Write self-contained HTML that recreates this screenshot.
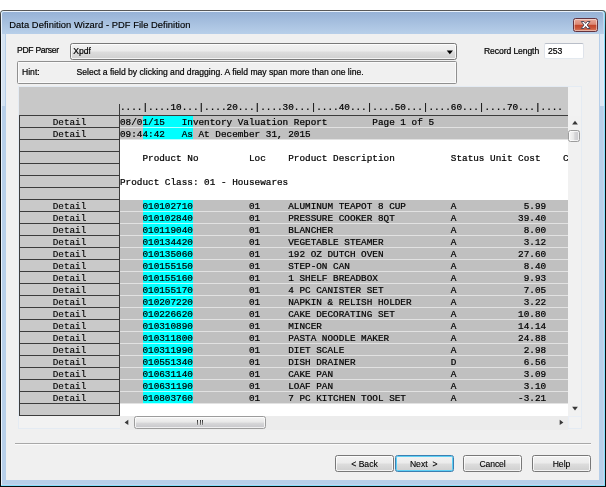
<!DOCTYPE html>
<html><head><meta charset="utf-8"><title>Data Definition Wizard - PDF File Definition</title>
<style>
html,body{margin:0;padding:0;background:#fff;}
body{width:606px;height:487px;position:relative;overflow:hidden;font-family:"Liberation Sans",sans-serif;color:#000;}
.abs,.abs *{position:absolute;box-sizing:border-box;}
#win{left:0;top:10px;width:606px;height:477px;background:linear-gradient(#5a5a5a 0px,#333 12px,#0c0c0c 30px,#0c0c0c 100%);border-radius:4px 4px 0 0;}
#hl{left:1px;top:1px;width:604px;height:475px;background:#84e0fc;border-radius:3px 3px 0 0;}
#hl2{left:0;top:0;width:603px;height:474px;background:#c8d2ea;border-left:1px solid #eaf2fb;border-top:1px solid #eaf2fb;border-radius:3px 3px 0 0;}
#frame{left:0;top:0;width:601px;height:472px;background:#b7cfe9;border-radius:2px 2px 0 0;}
#tbar{left:0;top:0;width:601px;height:22px;background:linear-gradient(#97b2d6,#b8cfe9);border-radius:2px 2px 0 0;}
#title{left:9.3px;top:19px;font-size:9.35px;line-height:12px;white-space:pre;color:#000;letter-spacing:0.045px;-webkit-text-stroke:0.15px #000;}
#client{left:6.4px;top:33.8px;width:592.6px;height:446.4px;background:#f0f0f0;}
.ui{font-size:8.6px;line-height:11px;white-space:pre;-webkit-text-stroke:0.2px #000;}
.btn{border:1px solid #787878;border-radius:2.5px;background:linear-gradient(#f2f2f2 0%,#ebebeb 48%,#dddddd 52%,#cfcfcf 100%);box-shadow:inset 0 0 0 1px rgba(255,255,255,.75);}
.btn span{left:0;right:0;text-align:center;top:3px;font-size:8.6px;line-height:11px;white-space:pre;-webkit-text-stroke:0.12px #000;}
.mono{font-family:"Liberation Mono",monospace;font-size:9.36px;line-height:12px;white-space:pre;color:#000;-webkit-text-stroke:0.22px #000;}
.lc{left:19px;width:101px;height:13px;border:1px solid #3c3c3c;background:#c9c9c9;}
.lc span{left:0;right:0;top:1px;text-align:center;-webkit-text-stroke:0.12px #000;}
.rowbg{left:120px;width:448px;height:11px;background:#c0c0c0;}
.rowsep{left:120px;width:448px;height:1px;background:#e2e2e2;}
.cy{left:142.6px;width:50.4px;height:11px;background:#00ffff;}
.cysep{left:142.6px;width:50.4px;height:1px;background:#b0ffff;}
.txt{left:120px;}
</style></head><body>
<div class="abs" style="will-change:transform;left:0;top:0;width:606px;height:487px;">
<div id="win"><div id="hl"><div id="hl2"><div id="frame"><div id="tbar"></div></div></div></div></div>
<div id="title">Data Definition Wizard - PDF File Definition</div>
<div style="left:2px;top:34px;width:3.4px;height:72px;background:rgba(255,255,255,.42);"></div>
<div style="left:600.4px;top:34px;width:3.4px;height:72px;background:rgba(255,255,255,.5);"></div>
<div id="client"></div>
<div id="close" style="left:573px;top:18px;width:25px;height:14px;border:1px solid #63333f;border-radius:2.5px;background:linear-gradient(#e9aa9b 0%,#dc8875 45%,#c2452b 50%,#c9553a 75%,#d77a5f 100%);box-shadow:inset 0 0 0 1px rgba(255,255,255,.45);">
<svg style="left:6px;top:1px" width="12" height="10" viewBox="0 0 12 10"><path d="M1.2 1.5 L4 1.5 L5.6 3.5 L7.2 1.5 L10 1.5 L7.2 5 L10 8.5 L7.2 8.5 L5.6 6.5 L4 8.5 L1.2 8.5 L4 5 Z" fill="#fff" stroke="#4a4456" stroke-width="0.95" stroke-linejoin="round"/></svg></div>
<div class="ui" style="left:17px;top:45.4px;letter-spacing:-0.3px;">PDF Parser</div>
<div class="btn" style="left:70px;top:43px;width:387px;height:17px;"><div class="ui" style="left:2.2px;top:2.2px;">Xpdf</div>
<svg style="left:375px;top:5.5px" width="8" height="5" viewBox="0 0 8 5"><path d="M0.7 0.5 L7 0.5 L3.85 4.2 Z" fill="#000"/></svg></div>
<div class="ui" style="left:484px;top:46px;letter-spacing:-0.1px;">Record Length</div>
<div style="left:543.5px;top:43px;width:40px;height:16px;border:1px solid #dfe3ea;border-top-color:#b9bec8;border-bottom-color:#e3e9ef;background:#fff;border-radius:2px;"><div class="ui" style="left:3.4px;top:2px;">253</div></div>
<div style="left:17px;top:61px;width:440px;height:23px;border:1px solid #909090;border-radius:1.5px;box-shadow:inset 0 0 0 1px #fafafa;"></div>
<div class="ui" style="left:22px;top:67px;">Hint:</div>
<div class="ui" style="left:76.5px;top:67px;">Select a field by clicking and dragging. A field may span more than one line.</div>
<div style="left:18px;top:86px;width:564px;height:343px;border:1px solid #e4ebf3;background:#f2f2f2;"></div>
<div style="left:19px;top:87px;width:549px;height:29px;background:#c8c8c8;"></div>
<div style="left:120px;top:116px;width:448px;height:300px;background:#fff;"></div>
<div style="left:19px;top:115px;width:549px;height:1px;background:#3c3c3c;"></div>
<div style="left:119px;top:104px;width:1px;height:312px;background:#3c3c3c;"></div>
<div class="mono txt" style="top:102px;">....|....10...|....20...|....30...|....40...|....50...|....60...|....70...|....</div>
<div class="lc" style="top:115px;"><span class="mono">Detail</span></div><div class="rowbg" style="top:116px;"></div><div class="cy" style="top:116px;"></div><div class="rowsep" style="top:127px;"></div><div class="cysep" style="top:127px;"></div><div class="mono txt" style="top:117px;">08/01/15   Inventory Valuation Report        Page 1 of 5</div>
<div class="lc" style="top:127px;"><span class="mono">Detail</span></div><div class="rowbg" style="top:128px;"></div><div class="cy" style="top:128px;"></div><div class="rowsep" style="top:139px;"></div><div class="cysep" style="top:139px;"></div><div class="mono txt" style="top:129px;">09:44:42   As At December 31, 2015</div>
<div class="lc" style="top:139px;"></div>
<div class="lc" style="top:151px;"></div><div class="mono txt" style="top:153px;">    Product No         Loc    Product Description          Status Unit Cost    C</div>
<div class="lc" style="top:163px;"></div>
<div class="lc" style="top:175px;"></div><div class="mono txt" style="top:177px;">Product Class: 01 - Housewares</div>
<div class="lc" style="top:187px;"></div>
<div class="lc" style="top:199px;"><span class="mono">Detail</span></div><div class="rowbg" style="top:200px;"></div><div class="cy" style="top:200px;"></div><div class="rowsep" style="top:211px;"></div><div class="cysep" style="top:211px;"></div><div class="mono txt" style="top:201px;">    010102710          01     ALUMINUM TEAPOT 8 CUP        A            5.99</div>
<div class="lc" style="top:211px;"><span class="mono">Detail</span></div><div class="rowbg" style="top:212px;"></div><div class="cy" style="top:212px;"></div><div class="rowsep" style="top:223px;"></div><div class="cysep" style="top:223px;"></div><div class="mono txt" style="top:213px;">    010102840          01     PRESSURE COOKER 8QT          A           39.40</div>
<div class="lc" style="top:223px;"><span class="mono">Detail</span></div><div class="rowbg" style="top:224px;"></div><div class="cy" style="top:224px;"></div><div class="rowsep" style="top:235px;"></div><div class="cysep" style="top:235px;"></div><div class="mono txt" style="top:225px;">    010119040          01     BLANCHER                     A            8.00</div>
<div class="lc" style="top:235px;"><span class="mono">Detail</span></div><div class="rowbg" style="top:236px;"></div><div class="cy" style="top:236px;"></div><div class="rowsep" style="top:247px;"></div><div class="cysep" style="top:247px;"></div><div class="mono txt" style="top:237px;">    010134420          01     VEGETABLE STEAMER            A            3.12</div>
<div class="lc" style="top:247px;"><span class="mono">Detail</span></div><div class="rowbg" style="top:248px;"></div><div class="cy" style="top:248px;"></div><div class="rowsep" style="top:259px;"></div><div class="cysep" style="top:259px;"></div><div class="mono txt" style="top:249px;">    010135060          01     192 OZ DUTCH OVEN            A           27.60</div>
<div class="lc" style="top:259px;"><span class="mono">Detail</span></div><div class="rowbg" style="top:260px;"></div><div class="cy" style="top:260px;"></div><div class="rowsep" style="top:271px;"></div><div class="cysep" style="top:271px;"></div><div class="mono txt" style="top:261px;">    010155150          01     STEP-ON CAN                  A            8.40</div>
<div class="lc" style="top:271px;"><span class="mono">Detail</span></div><div class="rowbg" style="top:272px;"></div><div class="cy" style="top:272px;"></div><div class="rowsep" style="top:283px;"></div><div class="cysep" style="top:283px;"></div><div class="mono txt" style="top:273px;">    010155160          01     1 SHELF BREADBOX             A            9.93</div>
<div class="lc" style="top:283px;"><span class="mono">Detail</span></div><div class="rowbg" style="top:284px;"></div><div class="cy" style="top:284px;"></div><div class="rowsep" style="top:295px;"></div><div class="cysep" style="top:295px;"></div><div class="mono txt" style="top:285px;">    010155170          01     4 PC CANISTER SET            A            7.05</div>
<div class="lc" style="top:295px;"><span class="mono">Detail</span></div><div class="rowbg" style="top:296px;"></div><div class="cy" style="top:296px;"></div><div class="rowsep" style="top:307px;"></div><div class="cysep" style="top:307px;"></div><div class="mono txt" style="top:297px;">    010207220          01     NAPKIN &amp; RELISH HOLDER       A            3.22</div>
<div class="lc" style="top:307px;"><span class="mono">Detail</span></div><div class="rowbg" style="top:308px;"></div><div class="cy" style="top:308px;"></div><div class="rowsep" style="top:319px;"></div><div class="cysep" style="top:319px;"></div><div class="mono txt" style="top:309px;">    010226620          01     CAKE DECORATING SET          A           10.80</div>
<div class="lc" style="top:319px;"><span class="mono">Detail</span></div><div class="rowbg" style="top:320px;"></div><div class="cy" style="top:320px;"></div><div class="rowsep" style="top:331px;"></div><div class="cysep" style="top:331px;"></div><div class="mono txt" style="top:321px;">    010310890          01     MINCER                       A           14.14</div>
<div class="lc" style="top:331px;"><span class="mono">Detail</span></div><div class="rowbg" style="top:332px;"></div><div class="cy" style="top:332px;"></div><div class="rowsep" style="top:343px;"></div><div class="cysep" style="top:343px;"></div><div class="mono txt" style="top:333px;">    010311800          01     PASTA NOODLE MAKER           A           24.88</div>
<div class="lc" style="top:343px;"><span class="mono">Detail</span></div><div class="rowbg" style="top:344px;"></div><div class="cy" style="top:344px;"></div><div class="rowsep" style="top:355px;"></div><div class="cysep" style="top:355px;"></div><div class="mono txt" style="top:345px;">    010311990          01     DIET SCALE                   A            2.98</div>
<div class="lc" style="top:355px;"><span class="mono">Detail</span></div><div class="rowbg" style="top:356px;"></div><div class="cy" style="top:356px;"></div><div class="rowsep" style="top:367px;"></div><div class="cysep" style="top:367px;"></div><div class="mono txt" style="top:357px;">    010551340          01     DISH DRAINER                 D            6.56</div>
<div class="lc" style="top:367px;"><span class="mono">Detail</span></div><div class="rowbg" style="top:368px;"></div><div class="cy" style="top:368px;"></div><div class="rowsep" style="top:379px;"></div><div class="cysep" style="top:379px;"></div><div class="mono txt" style="top:369px;">    010631140          01     CAKE PAN                     A            3.09</div>
<div class="lc" style="top:379px;"><span class="mono">Detail</span></div><div class="rowbg" style="top:380px;"></div><div class="cy" style="top:380px;"></div><div class="rowsep" style="top:391px;"></div><div class="cysep" style="top:391px;"></div><div class="mono txt" style="top:381px;">    010631190          01     LOAF PAN                     A            3.10</div>
<div class="lc" style="top:391px;"><span class="mono">Detail</span></div><div class="rowbg" style="top:392px;"></div><div class="cy" style="top:392px;"></div><div class="rowsep" style="top:403px;"></div><div class="cysep" style="top:403px;"></div><div class="mono txt" style="top:393px;">    010803760          01     7 PC KITCHEN TOOL SET        A           -3.21</div>
<div class="lc" style="top:403px;"></div>
<div style="left:568px;top:116px;width:13px;height:300px;background:#f1f1f1;"></div>
<svg style="left:571px;top:120px" width="8" height="6" viewBox="0 0 8 6"><path d="M4 0.8 L6.9 4.6 L1.1 4.6 Z" fill="#383838"/></svg>
<svg style="left:571px;top:406px" width="8" height="6" viewBox="0 0 8 6"><path d="M4 4.6 L6.9 0.8 L1.1 0.8 Z" fill="#383838"/></svg>
<div style="left:568px;top:130px;width:12px;height:12px;border:1px solid #9c9c9c;border-radius:2.5px;background:linear-gradient(90deg,#f6f6f6 0%,#e8e8e8 45%,#d6d6d8 58%,#c8c8cc 100%);box-shadow:inset 0 0 0 1px rgba(255,255,255,.7);"></div>
<div style="left:120px;top:416px;width:448px;height:13.5px;background:#ececec;"></div>
<svg style="left:124px;top:418px" width="5" height="9" viewBox="0 0 5 9"><path d="M0.6 4.4 L4.3 1.8 L4.3 7 Z" fill="#383838"/></svg>
<svg style="left:559px;top:418px" width="5" height="9" viewBox="0 0 5 9"><path d="M4.4 4.4 L0.7 1.8 L0.7 7 Z" fill="#383838"/></svg>
<div style="left:134px;top:416px;width:132px;height:12.6px;border:1px solid #9c9c9c;border-radius:2.5px;background:linear-gradient(#f6f6f6 0%,#e8e8e8 45%,#d6d6d8 58%,#c6c6ca 100%);box-shadow:inset 0 0 0 1px rgba(255,255,255,.7);">
<div style="left:62.2px;top:2.6px;width:1px;height:5px;background:linear-gradient(#2a2a2a,#8c8c8c);box-shadow:0 0 1px #fff;"></div><div style="left:64.7px;top:2.6px;width:1px;height:5px;background:linear-gradient(#2a2a2a,#8c8c8c);box-shadow:0 0 1px #fff;"></div><div style="left:67.2px;top:2.6px;width:1px;height:5px;background:linear-gradient(#2a2a2a,#8c8c8c);box-shadow:0 0 1px #fff;"></div></div>
<div style="left:568px;top:416px;width:13px;height:1px;background:#e9eef5;"></div><div style="left:568px;top:416px;width:1px;height:12px;background:#e9eef5;"></div>
<div style="left:15px;top:443px;width:576px;height:1px;background:#a8a8a8;"></div>
<div style="left:15px;top:444px;width:576px;height:1px;background:#fbfbfb;"></div>
<div class="btn" style="left:335px;top:455px;width:59px;height:17px;"><span>&lt; Back</span></div>
<div class="btn" style="left:395.4px;top:455px;width:58.6px;height:17px;border-color:#3c7fb1;box-shadow:inset 0 0 0 1px #5fd0f5;"><span style="word-spacing:2.5px;left:-2px;">Next &gt;</span></div>
<div class="btn" style="left:463px;top:455px;width:59px;height:17px;"><span style="letter-spacing:-0.15px;">Cancel</span></div>
<div class="btn" style="left:532px;top:455px;width:59px;height:17px;"><span>Help</span></div>
</div></body></html>
